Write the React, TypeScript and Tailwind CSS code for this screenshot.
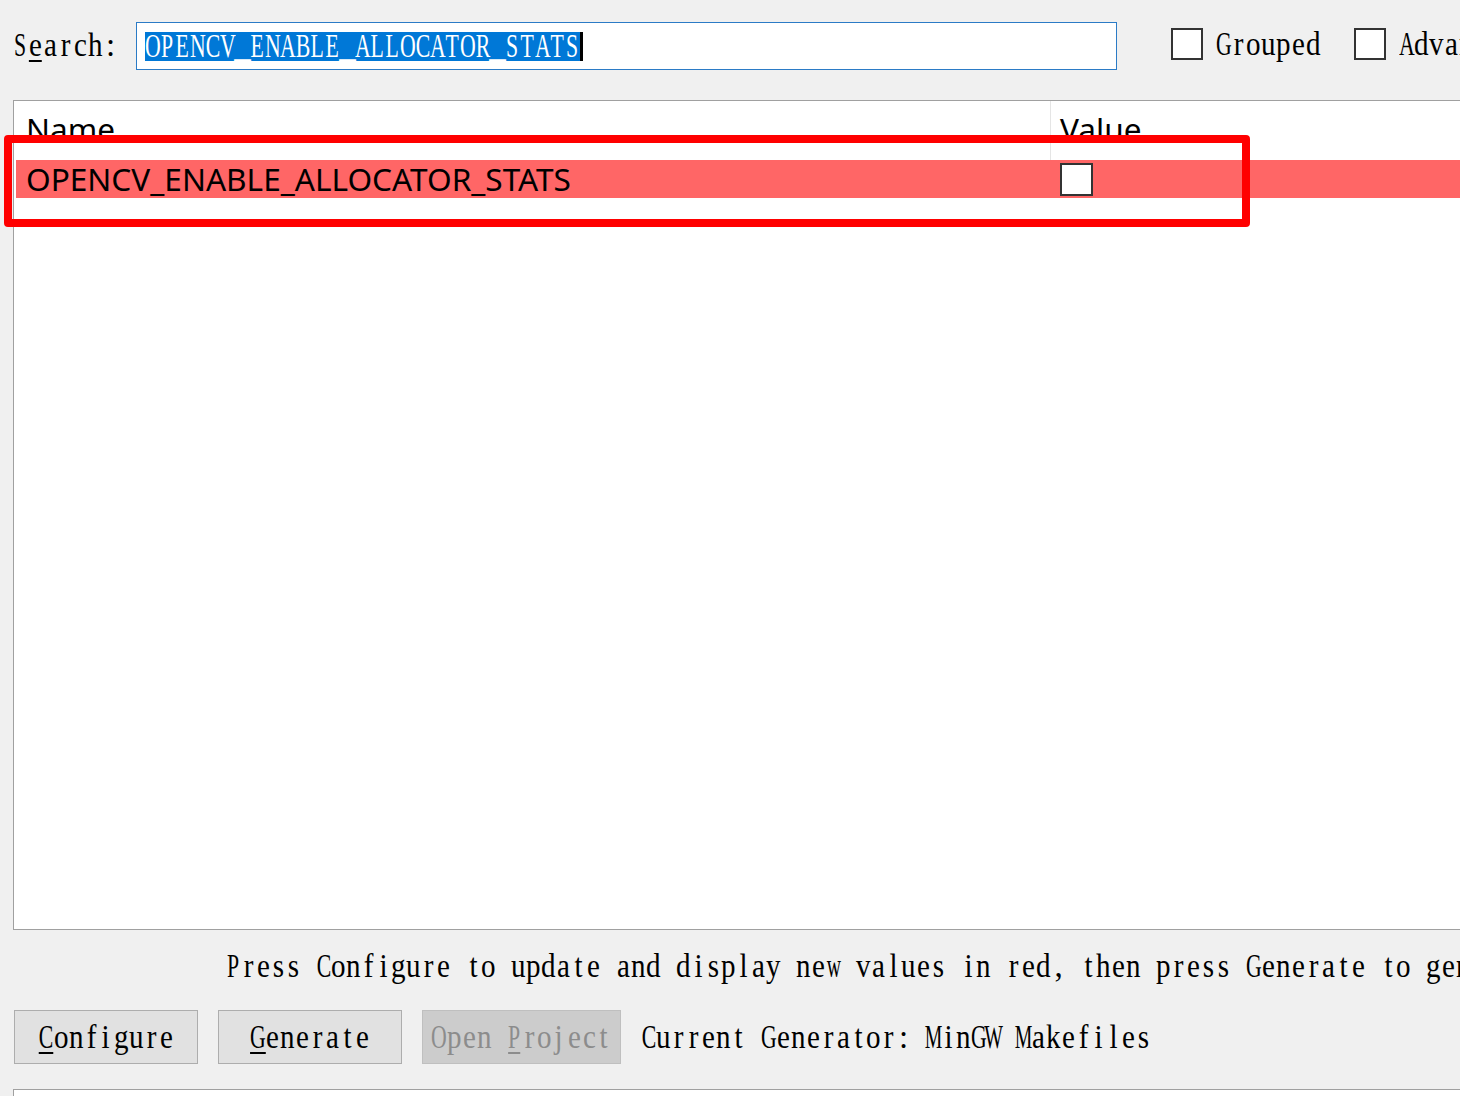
function glyphScale(c: string) {
  if (c === "M" || c === "W") return "scale-x-[0.6]";
  if (c === "m" || c === "w") return "scale-x-[0.6]";
  if (c >= "A" && c <= "Z") return "scale-x-[0.66]";
  if (c >= "a" && c <= "z") return "scale-x-[0.88]";
  return "scale-x-100";
}

// fixed 15px cells with condensed serif glyphs, like a Windows bitmap mono font
function Mono({ text, u = -1 }: { text: string; u?: number }) {
  return (
    <span className="inline-flex h-[30px] shrink-0 items-center whitespace-nowrap font-['Liberation_Serif',serif] text-[33px] leading-[30px]">
      {[...text].map((c, i) => (
        <span key={i} className="inline-flex w-[15px] shrink-0 justify-center">
          <span
            className={`inline-block shrink-0 origin-center ${glyphScale(c)} ${
              i === u ? "underline decoration-[2px] underline-offset-[4px]" : ""
            }`}
          >
            {c === " " ? "\u00a0" : c}
          </span>
        </span>
      ))}
    </span>
  );
}

function Box({ size = "h-[32px] w-[32px]" }: { size?: string }) {
  return <div className={`${size} shrink-0 border-2 border-[#333333] bg-white`} />;
}

function Button({
  text,
  u,
  disabled = false,
  width,
}: {
  text: string;
  u: number;
  disabled?: boolean;
  width: string;
}) {
  return (
    <div
      className={`flex h-[54px] ${width} shrink-0 items-center justify-center border ${
        disabled
          ? "border-[#bfbfbf] bg-[#cccccc] text-[#8c8c8c]"
          : "border-[#adadad] bg-[#e1e1e1] text-black"
      }`}
    >
      <Mono text={text} u={u} />
    </div>
  );
}

export default function App() {
  return (
    <div className="relative h-[1096px] w-[1460px] overflow-hidden bg-[#f0f0f0] pt-[22px] text-black">
      {/* search bar */}
      <div className="flex h-[48px] items-center pl-[13px]">
        <div className="w-[123px] shrink-0">
          <Mono text="Search:" u={1} />
        </div>
        <div className="flex h-[48px] w-[981px] shrink-0 items-center border border-[#2b7bc6] bg-white pl-[8px]">
          <div className="flex h-[29px] items-center bg-[#0078d7] text-white">
            <Mono text="OPENCV_ENABLE_ALLOCATOR_STATS" />
          </div>
          <div className="h-[29px] w-[3px] bg-black" />
        </div>
        <div className="mb-[4px] ml-[54px] flex shrink-0 items-center gap-[13px]">
          <Box />
          <Mono text="Grouped" />
        </div>
        <div className="mb-[4px] ml-[33px] flex shrink-0 items-center gap-[13px]">
          <Box />
          <Mono text="Advanced" />
        </div>
      </div>

      {/* cache table */}
      <div className="ml-[13px] mt-[30px] h-[830px] w-[1480px] border border-[#a0a0a0] bg-white font-['Noto_Sans',sans-serif] text-[31.6px]">
        <div className="flex h-[59px]">
          <div className="w-[1037px] shrink-0 border-r border-[#e5e5e5] pl-[12px] pt-[12px] leading-[31px]">
            Name
          </div>
          <div className="pl-[9px] pt-[12px] leading-[31px]">Value</div>
        </div>
        <div className="ml-[2px] flex h-[38px] items-center bg-[#ff6666]">
          <div className="w-[1035px] shrink-0 pl-[10px] leading-[38px]">OPENCV_ENABLE_ALLOCATOR_STATS</div>
          <div className="pl-[9px]">
            <Box size="h-[33px] w-[33px]" />
          </div>
        </div>
      </div>

      {/* hint */}
      <div className="flex h-[80px] items-center pb-[8px] pl-[226px]">
        <Mono text="Press Configure to update and display new values in red, then press Generate to gen" />
      </div>

      {/* buttons */}
      <div className="flex h-[54px] items-center gap-[20px] pl-[14px]">
        <Button text="Configure" u={0} width="w-[184px]" />
        <Button text="Generate" u={0} width="w-[184px]" />
        <Button text="Open Project" u={5} width="w-[199px]" disabled />
        <Mono text="Current Generator: MinGW Makefiles" />
      </div>

      {/* output panel */}
      <div className="ml-[13px] mt-[25px] h-[60px] w-[1480px] border border-[#a0a0a0] bg-white" />

      {/* highlight annotation */}
      <div className="pointer-events-none absolute left-[4px] top-[135px] h-[92px] w-[1246px] rounded-[4px] border-[8px] border-[#ff0000]" />
    </div>
  );
}
